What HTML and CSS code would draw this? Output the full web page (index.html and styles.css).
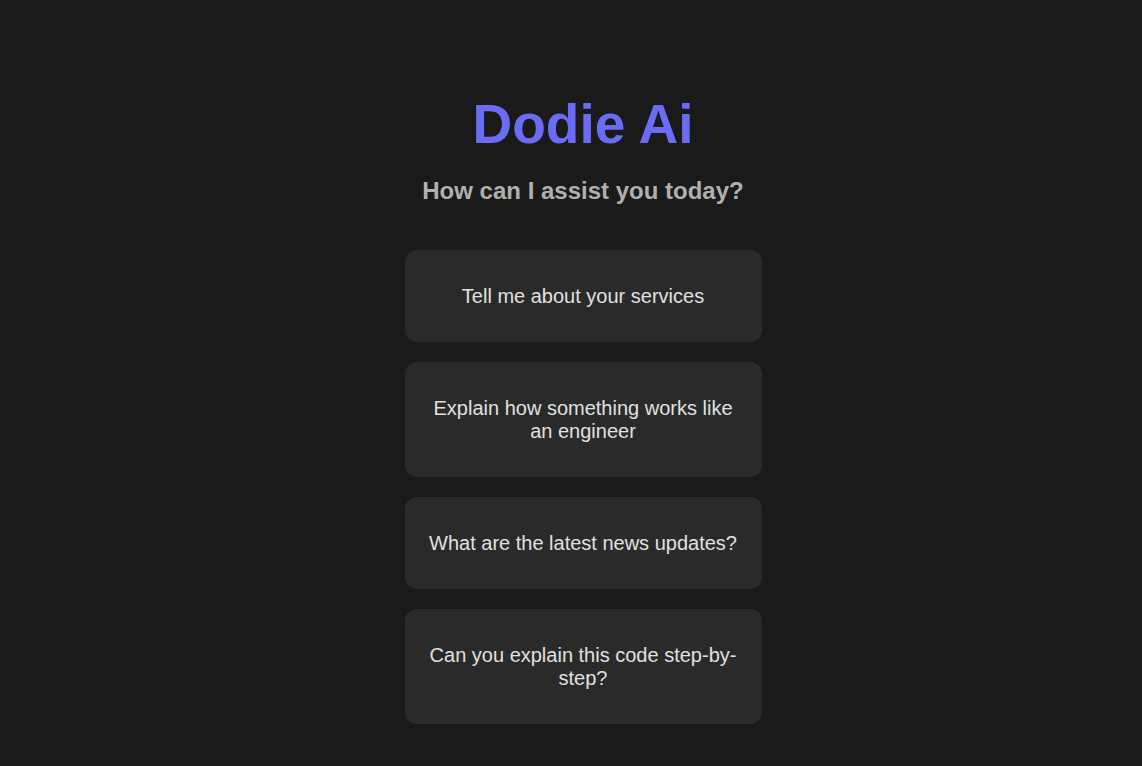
FILE: index.html
```html
<!DOCTYPE html>
<html lang="en">
<head>
<meta charset="utf-8">
<title>Dodie Ai</title>
<link rel="stylesheet" href="styles.css">
</head>
<body>
<main class="welcome">
  <h1 class="title">Dodie Ai</h1>
  <p class="subtitle">How can I assist you today?</p>
  <div class="suggestions">
    <button class="card">Tell me about your services</button>
    <button class="card">Explain how something works like an engineer</button>
    <button class="card">What are the latest news updates?</button>
    <button class="card">Can you explain this code step-by-step?</button>
  </div>
</main>
</body>
</html>
```
FILE: styles.css
```css
html, body {
  margin: 0;
  padding: 0;
  background: #1a1a1a;
  height: 100%;
}
body {
  font-family: "Liberation Sans", Arial, sans-serif;
  color: #e0e0e0;
}
.welcome {
  display: flex;
  flex-direction: column;
  align-items: center;
  padding-top: 93px;
  padding-left: 24px;
}
.title {
  margin: 0;
  font-size: 55px;
  line-height: 63px;
  font-weight: bold;
  color: #6a6cf6;
}
.subtitle {
  margin: 21px 0 0;
  font-size: 24px;
  line-height: 28px;
  font-weight: bold;
  color: #b0b0b0;
}
.suggestions {
  margin-top: 45px;
  display: flex;
  flex-direction: column;
  gap: 20px;
  width: 357px;
}
.card {
  background: #2a2a2a;
  border: none;
  border-radius: 12px;
  padding: 34.5px 23px;
  font-family: "Liberation Sans", Arial, sans-serif;
  font-size: 20px;
  line-height: 23px;
  color: #e0e0e0;
  text-align: center;
  cursor: pointer;
}
```
